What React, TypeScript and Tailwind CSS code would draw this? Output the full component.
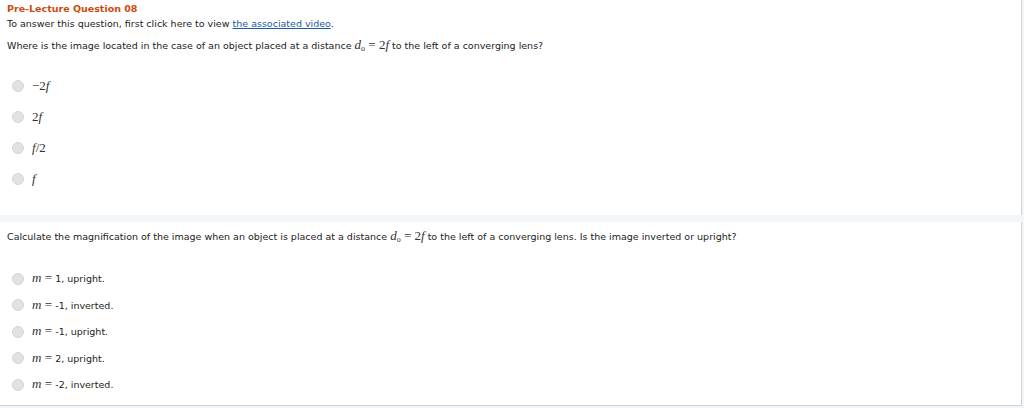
import React from 'react';

const Radio = () => (
  <span className="inline-block w-[12px] h-[12px] rounded-full bg-[#e2e2e2] border border-[#d6d6d6] shrink-0" />
);

const Math = ({ children }: { children: React.ReactNode }) => (
  <span className="font-['Liberation_Serif',serif] text-[13px] text-[#333]">{children}</span>
);

const Do = () => (
  <Math>
    <i>d</i>
    <sub className="text-[8px]">o</sub> = 2<i>f</i>
  </Math>
);

const App: React.FC = () => {
  const first = [
    <Math key="a">−2<i>f</i></Math>,
    <Math key="b">2<i>f</i></Math>,
    <Math key="c"><i>f</i>/2</Math>,
    <Math key="d"><i>f</i></Math>,
  ];

  const second = ['1, upright.', '-1, inverted.', '-1, upright.', '2, upright.', '-2, inverted.'];

  return (
    <div className="w-[1024px] h-[408px] bg-[#f3f6f9] font-['DejaVu_Sans',sans-serif] text-[9.5px] leading-[14px] text-[#222]">
      {/* question 1 */}
      <div className="w-[1022px] h-[215px] bg-white border-r border-[#cfd3d7] px-[7px] pt-[2px]">
        <div className="font-bold text-[#cc4b0c]">Pre-Lecture Question 08</div>
        <div className="mt-[1px]">
          To answer this question, first click here to view{' '}
          <span className="text-[#1a5a9e] underline">the associated video</span>.
        </div>
        <div className="mt-[7px]">
          Where is the image located in the case of an object placed at a distance <Do /> to the left of a converging lens?
        </div>
        <div className="mt-[24px] pl-[5px] flex flex-col gap-[14px]">
          {first.map((item, i) => (
            <div key={i} className="flex items-center gap-[8px] h-[17px]">
              <Radio />
              {item}
            </div>
          ))}
        </div>
      </div>

      {/* question 2 */}
      <div className="mt-[7px] w-[1022px] h-[184px] bg-white border-r border-b border-[#cfd3d7] px-[7px] pt-[7px]">
        <div>
          Calculate the magnification of the image when an object is placed at a distance <Do /> to the left of a converging lens. Is the image inverted or upright?
        </div>
        <div className="mt-[26px] pl-[5px] flex flex-col gap-[9.5px]">
          {second.map((s, i) => (
            <div key={i} className="flex items-center gap-[8px] h-[17px]">
              <Radio />
              <span>
                <Math><i>m</i> = </Math> {s}
              </span>
            </div>
          ))}
        </div>
      </div>
    </div>
  );
};

export default App;
